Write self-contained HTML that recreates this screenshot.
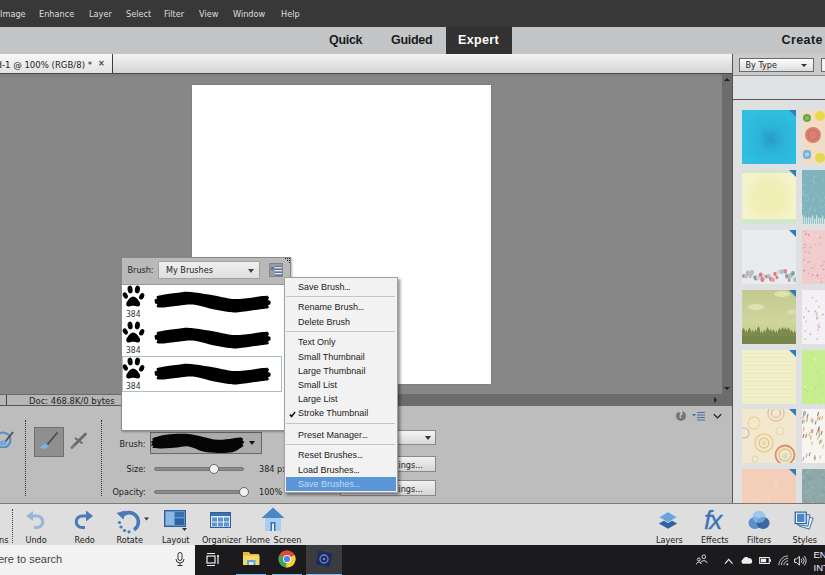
<!DOCTYPE html>
<html><head><meta charset="utf-8">
<style>
*{box-sizing:border-box;margin:0;padding:0}
html,body{width:825px;height:575px;overflow:hidden;background:#878787;font-family:"DejaVu Sans Condensed","DejaVu Sans",sans-serif;}
.lib{font-family:"Liberation Sans",sans-serif}
.abs{position:absolute}
.t{position:absolute;white-space:nowrap;line-height:1}
#menubar{left:0;top:0;width:825px;height:27px;background:#383838}
#menubar span{position:absolute;top:9.5px;font-size:9.1px;line-height:1;color:#dedede;white-space:nowrap;font-family:"DejaVu Sans Condensed","DejaVu Sans",sans-serif}
#modebar{left:0;top:27px;width:825px;height:27px;background:#c3c5c7}
#modebar span,#expert span{font-family:"Liberation Sans",sans-serif;position:absolute;top:7px;font-size:12.5px;line-height:1;font-weight:bold;color:#1a1a1a;letter-spacing:-0.3px}
#expert{left:446px;top:27px;width:66px;height:27px;background:#323232}
#expert span{color:#fff;left:12px}
#tabbar{left:0;top:54px;width:732px;height:20px;background:linear-gradient(#f4f4f4,#d4d4d4);border-bottom:1px solid #4a4a4a}
#doctab{left:0;top:54px;width:113px;height:19px;border-right:1px solid #3c3c3c;background:linear-gradient(#f8f8f8,#e2e2e2)}
#canvas{left:0;top:74px;width:722px;height:320px;background:linear-gradient(#7c7c7c,#878787 4px)}
#doc{left:192px;top:84.5px;width:299px;height:299.5px;background:#fff;box-shadow:0 0 1.5px rgba(0,0,0,.2)}
#vscroll{left:722px;top:74px;width:10px;height:332px;background:#6c6c6c}
#hscroll{left:0;top:394px;width:722px;height:12px;background:#6c6c6c}
#status{left:0;top:394px;width:200px;height:12px;background:#b6b6b6;border-top:1px solid #6a6a6a;border-bottom:1px solid #555}
#options{left:0;top:406px;width:732px;height:97px;background:#bdbdbd}
#taskbar{left:0;top:503px;width:825px;height:42px;background:#dedede;border-top:1px solid #7a7a7a}
#wintask{left:0;top:545px;width:825px;height:30px;background:#1b1b1d}
#right{left:732px;top:54px;width:93px;height:449px;background:#dfe0e2;border-left:1px solid #555}
</style></head><body>
<div id="menubar" class="abs">
<span style="left:0px">Image</span><span style="left:39px">Enhance</span><span style="left:89px">Layer</span><span style="left:126px">Select</span><span style="left:164px">Filter</span><span style="left:199px">View</span><span style="left:233px">Window</span><span style="left:281px">Help</span>
</div>
<div id="modebar" class="abs">
<span style="left:329px">Quick</span><span style="left:391px">Guided</span><span style="left:781.5px;letter-spacing:0.4px">Create</span>
</div>
<div id="expert" class="abs"><span style="letter-spacing:0.35px">Expert</span></div>
<div id="tabbar" class="abs"></div>
<div id="doctab" class="abs"><span class="t" style="left:-3.500px;top:5.500px;font-size:9.500px;color:#222">d-1 @ 100% (RGB/8) *</span><span class="t" style="left:98px;top:5px;font-size:9px;font-weight:bold;color:#444">×</span></div>
<div id="canvas" class="abs"></div>
<div id="doc" class="abs"></div>
<div id="hscroll" class="abs"></div>
<div id="vscroll" class="abs"></div>
<div id="status" class="abs"><div class="abs" style="left:6px;top:0;width:1px;height:10px;background:#444"></div><span class="t" style="left:29px;top:1px;font-size:9.4px;color:#222">Doc: 468.8K/0 bytes</span></div>
<div id="options" class="abs"></div>
<div id="right" class="abs"></div>
<div id="taskbar" class="abs"></div>
<div id="wintask" class="abs"></div>
<div id="rp" class="abs" style="left:733px;top:54px;width:92px;height:449px;overflow:hidden">
<div class="abs" style="left:0;top:0;width:92px;height:22px;background:#c9cbcd;border-bottom:1px solid #8c8c8c"></div>
<div class="abs" style="left:0;top:23px;width:92px;height:23px;background:#e1e2e4;border-bottom:1px solid #555"></div>
<div class="abs" style="left:6px;top:4px;width:75px;height:14px;border:1px solid #6a6a6a;background:linear-gradient(#fdfdfd,#dcdcdc)"><span class="t" style="left:5.500px;top:2px;font-size:9px;color:#222">By Type</span><div class="abs" style="left:61px;top:5px;border-left:3px solid transparent;border-right:3px solid transparent;border-top:3.500px solid #333"></div></div>
<div class="abs" style="left:88px;top:4px;width:10px;height:14px;border:1px solid #6a6a6a;background:#f4f4f4"></div>
<svg width="0" height="0" style="position:absolute"><defs><filter id="bl"><feGaussianBlur stdDeviation="1.800"/></filter><radialGradient id="gc" cx="0.55" cy="0.55" r="0.6"><stop offset="0" stop-color="#2aa0d0"/><stop offset="0.45" stop-color="#2bb6da"/><stop offset="1" stop-color="#2fc0e0"/></radialGradient><radialGradient id="gy" cx="0.5" cy="0.5" r="0.5"><stop offset="0" stop-color="#efedb0"/><stop offset="0.6" stop-color="#f1efb8"/><stop offset="1" stop-color="#f5f3cc"/></radialGradient><linearGradient id="go" x1="0" y1="0" x2="0" y2="1"><stop offset="0" stop-color="#c3ca90"/><stop offset="0.6" stop-color="#cfd59c"/><stop offset="1" stop-color="#bcc586"/></linearGradient></defs></svg>
<svg class="abs" style="left:9px;top:56px" width="54" height="54" viewBox="0 0 54 54"><rect width="54" height="54" fill="#2bb8dc"/><rect width="54" height="54" fill="url(#gc)"/><path d="M20 22 L34 34 M31 21 L24 36" stroke="#2a90c4" stroke-width="4" opacity=".35" filter="url(#bl)"/><path d="M47 0 H54 V7 Z" fill="#2c7fc0"/></svg>
<svg class="abs" style="left:9px;top:116px" width="54" height="54" viewBox="0 0 54 54"><rect width="54" height="54" fill="#f2f0c2"/><rect width="54" height="54" fill="url(#gy)"/><rect width="54" height="3" fill="#cfe6d0"/><rect y="50" width="54" height="4" fill="#cfe6d0"/><rect y="49" width="54" height="1" fill="#e8e6b0"/><path d="M47 0 H54 V7 Z" fill="#2c7fc0"/></svg>
<svg class="abs" style="left:9px;top:176px" width="54" height="54" viewBox="0 0 54 54"><rect width="54" height="54" fill="#e9ecee"/><ellipse cx="1.7" cy="45.9" rx="1.6" ry="2.0" fill="#e07880"/><ellipse cx="4.0" cy="46.2" rx="1.8" ry="2.3" fill="#a8c4c8"/><ellipse cx="5.8" cy="43.1" rx="2.2" ry="2.7" fill="#a8c4c8"/><ellipse cx="8.2" cy="45.9" rx="1.6" ry="2.0" fill="#e6a3ab"/><ellipse cx="9.9" cy="42.4" rx="2.1" ry="2.7" fill="#a8c4c8"/><ellipse cx="12.5" cy="47.0" rx="1.3" ry="1.6" fill="#e07880"/><ellipse cx="13.8" cy="48.0" rx="2.0" ry="2.5" fill="#7fa0a4"/><ellipse cx="16.3" cy="47.5" rx="2.1" ry="2.6" fill="#c8d8dc"/><ellipse cx="18.7" cy="44.8" rx="1.9" ry="2.4" fill="#e07880"/><ellipse cx="20.4" cy="49.4" rx="2.1" ry="2.6" fill="#d9868c"/><ellipse cx="21.9" cy="45.5" rx="1.5" ry="1.8" fill="#c8d8dc"/><ellipse cx="24.5" cy="46.6" rx="1.5" ry="1.9" fill="#e07880"/><ellipse cx="27.0" cy="46.2" rx="1.7" ry="2.2" fill="#a8c4c8"/><ellipse cx="28.8" cy="49.1" rx="1.9" ry="2.4" fill="#d9868c"/><ellipse cx="31.1" cy="49.9" rx="1.9" ry="2.3" fill="#e6a3ab"/><ellipse cx="33.0" cy="43.9" rx="1.7" ry="2.2" fill="#e07880"/><ellipse cx="34.9" cy="47.4" rx="1.4" ry="1.8" fill="#e07880"/><ellipse cx="36.6" cy="42.1" rx="1.7" ry="2.1" fill="#c8d8dc"/><ellipse cx="39.5" cy="41.8" rx="2.0" ry="2.5" fill="#a8c4c8"/><ellipse cx="41.4" cy="41.2" rx="1.6" ry="2.0" fill="#a8c4c8"/><ellipse cx="43.4" cy="41.4" rx="1.8" ry="2.3" fill="#d9868c"/><ellipse cx="44.9" cy="46.3" rx="1.8" ry="2.2" fill="#7fa0a4"/><ellipse cx="47.1" cy="50.0" rx="1.5" ry="1.9" fill="#d9868c"/><ellipse cx="48.7" cy="45.8" rx="2.1" ry="2.7" fill="#a8c4c8"/><ellipse cx="50.9" cy="43.4" rx="1.9" ry="2.4" fill="#7fa0a4"/><ellipse cx="53.0" cy="49.6" rx="2.1" ry="2.6" fill="#a8c4c8"/><path d="M47 0 H54 V7 Z" fill="#2c7fc0"/></svg>
<svg class="abs" style="left:9px;top:236px" width="54" height="54" viewBox="0 0 54 54"><rect width="54" height="54" fill="#c6cd93"/><rect width="54" height="54" fill="url(#go)"/><ellipse cx="14" cy="17" rx="8" ry="3" fill="#dde2b4"/><ellipse cx="40" cy="4" rx="8" ry="3" fill="#dde2b4"/><ellipse cx="50" cy="22" rx="5" ry="2.500" fill="#d9deae"/><path d="M0 54 V41.5 L0.0 40.4 L1.5 37.4 L3.0 40.4 L3.0 42.8 L4.5 39.8 L6.0 42.8 L6.0 40.4 L7.5 37.4 L9.0 40.4 L9.0 42.8 L10.5 39.8 L12.0 42.8 L12.0 41.9 L13.5 38.9 L15.0 41.9 L15.0 39.0 L16.5 36.0 L18.0 39.0 L18.0 43.4 L19.5 40.4 L21.0 43.4 L21.0 42.6 L22.5 39.6 L24.0 42.6 L24.0 39.9 L25.5 36.9 L27.0 39.9 L27.0 41.7 L28.5 38.7 L30.0 41.7 L30.0 42.1 L31.5 39.1 L33.0 42.1 L33.0 43.2 L34.5 40.2 L36.0 43.2 L36.0 40.7 L37.5 37.7 L39.0 40.7 L39.0 39.8 L40.5 36.8 L42.0 39.8 L42.0 40.0 L43.5 37.0 L45.0 40.0 L45.0 40.2 L46.5 37.2 L48.0 40.2 L48.0 42.4 L49.5 39.4 L51.0 42.4 L51.0 43.4 L52.5 40.4 L54.0 43.4 L54 41.5 V54 Z" fill="#7e8a4c"/><path d="M0 46 H54 V54 H0 Z" fill="#78854a"/><path d="M47 0 H54 V7 Z" fill="#2c7fc0"/></svg>
<svg class="abs" style="left:9px;top:296px" width="54" height="54" viewBox="0 0 54 54"><rect width="54" height="54" fill="#f1f0cb"/><rect y="3" width="54" height="1" fill="#eaeac0"/><rect y="7" width="54" height="1" fill="#eaeac0"/><rect y="11" width="54" height="1" fill="#eaeac0"/><rect y="15" width="54" height="1" fill="#eaeac0"/><rect y="19" width="54" height="1" fill="#eaeac0"/><rect y="23" width="54" height="1" fill="#eaeac0"/><rect y="27" width="54" height="1" fill="#eaeac0"/><rect y="31" width="54" height="1" fill="#eaeac0"/><rect y="35" width="54" height="1" fill="#eaeac0"/><rect y="39" width="54" height="1" fill="#eaeac0"/><rect y="43" width="54" height="1" fill="#eaeac0"/><rect y="47" width="54" height="1" fill="#eaeac0"/><rect y="51" width="54" height="1" fill="#eaeac0"/><path d="M47 0 H54 V7 Z" fill="#2c7fc0"/></svg>
<svg class="abs" style="left:9px;top:355px" width="54" height="54" viewBox="0 0 54 54"><rect width="54" height="54" fill="#f2e8cf"/><circle cx="22" cy="34" r="9" fill="none" stroke="#e8d08c" stroke-width="1.500"/><circle cx="22" cy="34" r="5" fill="none" stroke="#e8c890" stroke-width="1.500"/><circle cx="22" cy="34" r="2" fill="#e6d9a0"/><circle cx="43" cy="46" r="9.500" fill="none" stroke="#d4906c" stroke-width="1.800"/><circle cx="43" cy="46" r="6" fill="none" stroke="#e4c47c" stroke-width="1.500"/><circle cx="43" cy="47" r="3" fill="#cfe0c4"/><circle cx="34" cy="4" r="8" fill="none" stroke="#e6c4a0" stroke-width="1.500"/><circle cx="34" cy="4" r="4.500" fill="none" stroke="#e0b4a4" stroke-width="1.200"/><circle cx="12" cy="14" r="6" fill="none" stroke="#ead894" stroke-width="1.300"/><circle cx="38" cy="22" r="4" fill="none" stroke="#ead8a0" stroke-width="1.200"/><circle cx="2" cy="24" r="5" fill="none" stroke="#c8bcc0" stroke-width="1.200"/><circle cx="13" cy="50" r="3" fill="none" stroke="#e6d49c" stroke-width="1"/><path d="M47 0 H54 V7 Z" fill="#2c7fc0"/></svg>
<svg class="abs" style="left:9px;top:415px" width="54" height="54" viewBox="0 0 54 54"><rect width="54" height="54" fill="#f3cfba"/><circle cx="17.7" cy="20.8" r="0.700" fill="#f9e4d8"/><circle cx="31.5" cy="8.7" r="0.700" fill="#f9e4d8"/><circle cx="33.7" cy="18.6" r="0.700" fill="#f9e4d8"/><circle cx="19.6" cy="47.9" r="0.700" fill="#f9e4d8"/><circle cx="32.4" cy="15.9" r="0.700" fill="#f9e4d8"/><circle cx="26.5" cy="31.5" r="0.700" fill="#f9e4d8"/><circle cx="49.7" cy="3.1" r="0.700" fill="#f9e4d8"/><circle cx="20.5" cy="33.4" r="0.700" fill="#f9e4d8"/><circle cx="16.9" cy="32.1" r="0.700" fill="#f9e4d8"/><circle cx="10.9" cy="11.3" r="0.700" fill="#f9e4d8"/><circle cx="39.9" cy="44.2" r="0.700" fill="#f9e4d8"/><circle cx="15.2" cy="41.4" r="0.700" fill="#f9e4d8"/><circle cx="7.2" cy="42.7" r="0.700" fill="#f9e4d8"/><circle cx="50.6" cy="36.2" r="0.700" fill="#f9e4d8"/><circle cx="8.6" cy="27.0" r="0.700" fill="#f9e4d8"/><circle cx="34.7" cy="15.5" r="0.700" fill="#f9e4d8"/><circle cx="18.4" cy="35.9" r="0.700" fill="#f9e4d8"/><circle cx="34.5" cy="6.9" r="0.700" fill="#f9e4d8"/><circle cx="32.0" cy="49.5" r="0.700" fill="#f9e4d8"/><circle cx="35.7" cy="13.2" r="0.700" fill="#f9e4d8"/><circle cx="42.5" cy="50.0" r="0.700" fill="#f9e4d8"/><circle cx="6.0" cy="39.1" r="0.700" fill="#f9e4d8"/><circle cx="12.9" cy="30.4" r="0.700" fill="#f9e4d8"/><circle cx="15.5" cy="41.4" r="0.700" fill="#f9e4d8"/><circle cx="3.7" cy="49.9" r="0.700" fill="#f9e4d8"/><path d="M47 0 H54 V7 Z" fill="#2c7fc0"/></svg>
<svg class="abs" style="left:69px;top:56px" width="24" height="54" viewBox="0 0 24 54"><rect width="24" height="54" fill="#f3dcc6"/><circle cx="5" cy="8" r="4" fill="#6ea446"/><circle cx="5" cy="8" r="2" fill="#8cba5c"/><circle cx="18" cy="6" r="5" fill="#ecd94a"/><circle cx="11" cy="25" r="8" fill="#d98274"/><circle cx="11" cy="25" r="5" fill="none" stroke="#c86c60" stroke-width="1"/><rect x="1" y="40" width="8" height="9" rx="3" fill="#76b4dc"/><circle cx="5" cy="44.500" r="2" fill="#b0d4ec"/><circle cx="18" cy="48" r="5" fill="#e6d84c"/></svg>
<svg class="abs" style="left:69px;top:116px" width="24" height="54" viewBox="0 0 24 54"><rect width="24" height="54" fill="#80b4bd"/><rect x="7.2" y="39.1" width="0.600" height="1.600" fill="#a8cdd3"/><rect x="13.2" y="40.3" width="0.600" height="1.600" fill="#a8cdd3"/><rect x="7.8" y="38.8" width="0.600" height="1.600" fill="#a8cdd3"/><rect x="2.0" y="30.0" width="0.600" height="1.600" fill="#a8cdd3"/><rect x="13.6" y="21.7" width="0.600" height="1.600" fill="#a8cdd3"/><rect x="11.9" y="39.7" width="0.600" height="1.600" fill="#a8cdd3"/><rect x="10.7" y="30.6" width="0.600" height="1.600" fill="#a8cdd3"/><rect x="6.7" y="27.9" width="0.600" height="1.600" fill="#a8cdd3"/><rect x="0.8" y="21.4" width="0.600" height="1.600" fill="#a8cdd3"/><rect x="4.6" y="24.0" width="0.600" height="1.600" fill="#a8cdd3"/><rect x="19.1" y="30.2" width="0.600" height="1.600" fill="#a8cdd3"/><rect x="11.7" y="27.5" width="0.600" height="1.600" fill="#a8cdd3"/><rect x="22.7" y="34.1" width="0.600" height="1.600" fill="#a8cdd3"/><rect x="0.7" y="23.2" width="0.600" height="1.600" fill="#a8cdd3"/><rect x="17.3" y="35.4" width="0.600" height="1.600" fill="#a8cdd3"/><rect x="22.2" y="26.8" width="0.600" height="1.600" fill="#a8cdd3"/><rect x="20.5" y="40.2" width="0.600" height="1.600" fill="#a8cdd3"/><rect x="19.7" y="44.8" width="0.600" height="1.600" fill="#a8cdd3"/><rect x="2.8" y="14.3" width="0.600" height="1.600" fill="#a8cdd3"/><rect x="0.8" y="37.7" width="0.600" height="1.600" fill="#a8cdd3"/><rect x="11.8" y="12.3" width="0.600" height="1.600" fill="#a8cdd3"/><rect x="20.3" y="22.1" width="0.600" height="1.600" fill="#a8cdd3"/><rect x="1.1" y="24.2" width="0.600" height="1.600" fill="#a8cdd3"/><rect x="2.8" y="25.1" width="0.600" height="1.600" fill="#a8cdd3"/><rect x="5.5" y="4.8" width="0.600" height="1.600" fill="#a8cdd3"/><rect x="12.4" y="6.2" width="0.600" height="1.600" fill="#a8cdd3"/><rect x="21.0" y="8.8" width="0.600" height="1.600" fill="#a8cdd3"/><rect x="2.9" y="44.8" width="0.600" height="1.600" fill="#a8cdd3"/><rect x="12.4" y="38.1" width="0.600" height="1.600" fill="#a8cdd3"/><rect x="1.4" y="13.3" width="0.600" height="1.600" fill="#a8cdd3"/><rect x="2.8" y="41.3" width="0.600" height="1.600" fill="#a8cdd3"/><rect x="2.7" y="14.1" width="0.600" height="1.600" fill="#a8cdd3"/><rect x="6.3" y="41.4" width="0.600" height="1.600" fill="#a8cdd3"/><rect x="3.0" y="42.7" width="0.600" height="1.600" fill="#a8cdd3"/><rect x="11.2" y="28.0" width="0.600" height="1.600" fill="#a8cdd3"/><rect x="9.2" y="35.8" width="0.600" height="1.600" fill="#a8cdd3"/><rect x="5.7" y="30.0" width="0.600" height="1.600" fill="#a8cdd3"/><rect x="12.0" y="6.1" width="0.600" height="1.600" fill="#a8cdd3"/><rect x="7.4" y="38.4" width="0.600" height="1.600" fill="#a8cdd3"/><rect x="19.7" y="36.6" width="0.600" height="1.600" fill="#a8cdd3"/><rect x="1.1" y="6.1" width="0.600" height="1.600" fill="#a8cdd3"/><rect x="11.1" y="5.4" width="0.600" height="1.600" fill="#a8cdd3"/><rect x="16.4" y="25.6" width="0.600" height="1.600" fill="#a8cdd3"/><rect x="11.3" y="10.6" width="0.600" height="1.600" fill="#a8cdd3"/><rect x="1.7" y="20.2" width="0.600" height="1.600" fill="#a8cdd3"/><rect x="9.0" y="16.8" width="0.600" height="1.600" fill="#a8cdd3"/><rect x="6.1" y="45.5" width="0.600" height="1.600" fill="#a8cdd3"/><rect x="9.9" y="9.4" width="0.600" height="1.600" fill="#a8cdd3"/><rect x="0.1" y="34.4" width="0.600" height="1.600" fill="#a8cdd3"/><rect x="18.3" y="27.8" width="0.600" height="1.600" fill="#a8cdd3"/><rect x="0" y="45.2" width="1.300" height="9" fill="#cfe2e4"/><rect x="2" y="46.8" width="1.300" height="9" fill="#cfe2e4"/><rect x="4" y="47.6" width="1.300" height="9" fill="#cfe2e4"/><rect x="6" y="47.2" width="1.300" height="9" fill="#cfe2e4"/><rect x="8" y="47.5" width="1.300" height="9" fill="#cfe2e4"/><rect x="10" y="45.2" width="1.300" height="9" fill="#cfe2e4"/><rect x="12" y="48.5" width="1.300" height="9" fill="#cfe2e4"/><rect x="14" y="45.2" width="1.300" height="9" fill="#cfe2e4"/><rect x="16" y="47.5" width="1.300" height="9" fill="#cfe2e4"/><rect x="18" y="48.0" width="1.300" height="9" fill="#cfe2e4"/><rect x="20" y="46.3" width="1.300" height="9" fill="#cfe2e4"/><rect x="22" y="48.8" width="1.300" height="9" fill="#cfe2e4"/></svg>
<svg class="abs" style="left:69px;top:176px" width="24" height="54" viewBox="0 0 24 54"><rect width="24" height="54" fill="#f1cccd"/><circle cx="9.6" cy="1.0" r="0.5" fill="#f8e4e4"/><circle cx="16.0" cy="3.9" r="0.6" fill="#f8e4e4"/><circle cx="3.0" cy="1.5" r="0.6" fill="#d88890"/><circle cx="18.2" cy="14.2" r="0.6" fill="#e09aa2"/><circle cx="21.6" cy="39.5" r="0.8" fill="#d88890"/><circle cx="18.2" cy="36.0" r="0.8" fill="#d88890"/><circle cx="12.2" cy="43.8" r="0.8" fill="#f8e4e4"/><circle cx="3.3" cy="41.8" r="0.4" fill="#e09aa2"/><circle cx="13.0" cy="35.6" r="0.6" fill="#e09aa2"/><circle cx="7.9" cy="46.0" r="0.4" fill="#e09aa2"/><circle cx="15.5" cy="45.2" r="0.9" fill="#d88890"/><circle cx="6.9" cy="4.8" r="0.9" fill="#d88890"/><circle cx="11.8" cy="38.6" r="0.5" fill="#d88890"/><circle cx="2.3" cy="29.9" r="0.7" fill="#d88890"/><circle cx="4.1" cy="4.2" r="0.9" fill="#d88890"/><circle cx="5.7" cy="33.3" r="0.8" fill="#f8e4e4"/><circle cx="5.8" cy="32.4" r="0.9" fill="#d88890"/><circle cx="9.6" cy="4.5" r="0.7" fill="#f8e4e4"/><circle cx="19.4" cy="52.2" r="0.6" fill="#d88890"/><circle cx="17.4" cy="36.4" r="0.7" fill="#f8e4e4"/><circle cx="3.6" cy="21.7" r="0.8" fill="#e09aa2"/><circle cx="2.2" cy="40.4" r="0.9" fill="#d88890"/><circle cx="21.9" cy="31.7" r="0.8" fill="#e09aa2"/><circle cx="6.1" cy="10.8" r="0.7" fill="#f8e4e4"/><circle cx="21.5" cy="46.0" r="0.7" fill="#f8e4e4"/><circle cx="15.4" cy="46.2" r="0.7" fill="#d88890"/><circle cx="13.4" cy="14.4" r="0.5" fill="#e09aa2"/><circle cx="6.2" cy="43.4" r="0.5" fill="#d88890"/><circle cx="8.3" cy="17.4" r="0.8" fill="#e09aa2"/><circle cx="9.6" cy="37.7" r="0.8" fill="#e09aa2"/><circle cx="10.8" cy="45.1" r="0.8" fill="#d88890"/><circle cx="0.6" cy="53.6" r="0.4" fill="#f8e4e4"/><circle cx="18.0" cy="47.6" r="0.4" fill="#e09aa2"/><circle cx="20.5" cy="35.0" r="0.8" fill="#e09aa2"/><circle cx="22.1" cy="46.1" r="0.5" fill="#e09aa2"/><circle cx="17.8" cy="7.4" r="0.7" fill="#d88890"/><circle cx="19.7" cy="48.6" r="0.5" fill="#e09aa2"/><circle cx="7.2" cy="22.9" r="0.8" fill="#e09aa2"/><circle cx="2.7" cy="14.3" r="0.9" fill="#e09aa2"/><circle cx="8.2" cy="31.3" r="0.7" fill="#e09aa2"/><circle cx="0.7" cy="17.9" r="0.6" fill="#e09aa2"/><circle cx="4.8" cy="31.6" r="0.9" fill="#f8e4e4"/><circle cx="2.9" cy="17.2" r="0.8" fill="#e09aa2"/><circle cx="15.3" cy="6.1" r="0.8" fill="#f8e4e4"/><circle cx="2.2" cy="50.8" r="0.6" fill="#f8e4e4"/></svg>
<svg class="abs" style="left:69px;top:236px" width="24" height="54" viewBox="0 0 24 54"><rect width="24" height="54" fill="#f3f1f6"/><circle cx="16.9" cy="16.8" r="1" fill="#f0c0cc"/><circle cx="15.1" cy="49.2" r="1" fill="#c8d4a8"/><circle cx="3.3" cy="49.2" r="1" fill="#c8d4a8"/><circle cx="15.1" cy="28.8" r="1" fill="#e8a8bc"/><circle cx="15.0" cy="27.4" r="1" fill="#e8a8bc"/><circle cx="16.1" cy="35.9" r="1" fill="#f0c0cc"/><circle cx="16.6" cy="34.3" r="1" fill="#f0c0cc"/><circle cx="14.2" cy="11.0" r="1" fill="#f0c0cc"/><circle cx="10.5" cy="7.4" r="1" fill="#f0c0cc"/><circle cx="4.0" cy="18.6" r="1" fill="#f0c0cc"/><circle cx="14.6" cy="23.0" r="1" fill="#c8d4a8"/><circle cx="14.6" cy="24.9" r="1" fill="#c8d4a8"/><circle cx="17.4" cy="37.3" r="1" fill="#e8a8bc"/><circle cx="16.0" cy="39.7" r="1" fill="#f0c0cc"/><circle cx="13.1" cy="21.6" r="1" fill="#e8a8bc"/><circle cx="6.6" cy="21.2" r="1" fill="#e8a8bc"/><circle cx="1.9" cy="27.2" r="1" fill="#e8a8bc"/><circle cx="15.6" cy="27.7" r="1" fill="#c8d4a8"/><circle cx="20.8" cy="24.4" r="1" fill="#e8a8bc"/><circle cx="8.4" cy="44.3" r="1" fill="#e8a8bc"/><circle cx="4.2" cy="31.5" r="1" fill="#f0c0cc"/><circle cx="3.4" cy="40.9" r="1" fill="#f0c0cc"/></svg>
<svg class="abs" style="left:69px;top:296px" width="24" height="54" viewBox="0 0 24 54"><rect width="24" height="54" fill="#c6ee8e"/><circle cx="3.4" cy="36.9" r="0.700" fill="#f0f4c0"/><circle cx="15.1" cy="21.6" r="0.700" fill="#e8b0a0"/><circle cx="13.4" cy="9.3" r="0.700" fill="#f0f4c0"/><circle cx="17.8" cy="29.2" r="0.700" fill="#e8b0a0"/><circle cx="12.9" cy="12.1" r="0.700" fill="#f0f4c0"/><circle cx="8.8" cy="16.7" r="0.700" fill="#f0f4c0"/><circle cx="19.7" cy="49.5" r="0.700" fill="#f0f4c0"/><circle cx="7.6" cy="47.3" r="0.700" fill="#f0f4c0"/><circle cx="14.3" cy="50.8" r="0.700" fill="#f0f4c0"/><circle cx="19.8" cy="35.4" r="0.700" fill="#e8b0a0"/><circle cx="13.6" cy="38.3" r="0.700" fill="#e8b0a0"/><circle cx="3.3" cy="39.8" r="0.700" fill="#e8b0a0"/><circle cx="11.3" cy="28.2" r="0.700" fill="#f0f4c0"/><circle cx="5.2" cy="41.1" r="0.700" fill="#e8b0a0"/></svg>
<svg class="abs" style="left:69px;top:355px" width="24" height="54" viewBox="0 0 24 54"><rect width="24" height="54" fill="#f7f5ef"/><path d="M1.8 25.5 l-0.800 3" stroke="#b0706c" stroke-width="1.100" stroke-linecap="round"/><path d="M15.2 22.8 l-0.800 3" stroke="#8fa8c0" stroke-width="1.100" stroke-linecap="round"/><path d="M13.5 48.0 l-0.800 3" stroke="#8fa8c0" stroke-width="1.100" stroke-linecap="round"/><path d="M20.6 7.6 l-0.800 3" stroke="#e0c070" stroke-width="1.100" stroke-linecap="round"/><path d="M18.4 31.5 l-0.800 3" stroke="#7c98a8" stroke-width="1.100" stroke-linecap="round"/><path d="M2.1 18.6 l-0.800 3" stroke="#d9a070" stroke-width="1.100" stroke-linecap="round"/><path d="M6.1 4.8 l-0.800 3" stroke="#e0c070" stroke-width="1.100" stroke-linecap="round"/><path d="M12.9 46.6 l-0.800 3" stroke="#d9a070" stroke-width="1.100" stroke-linecap="round"/><path d="M8.1 43.7 l-0.800 3" stroke="#7c98a8" stroke-width="1.100" stroke-linecap="round"/><path d="M16.3 7.6 l-0.800 3" stroke="#d9a070" stroke-width="1.100" stroke-linecap="round"/><path d="M19.9 30.5 l-0.800 3" stroke="#e0c070" stroke-width="1.100" stroke-linecap="round"/><path d="M21.4 36.1 l-0.800 3" stroke="#e0c070" stroke-width="1.100" stroke-linecap="round"/><path d="M17.3 17.8 l-0.800 3" stroke="#b0706c" stroke-width="1.100" stroke-linecap="round"/><path d="M18.7 46.7 l-0.800 3" stroke="#e0c070" stroke-width="1.100" stroke-linecap="round"/><path d="M20.0 22.4 l-0.800 3" stroke="#b0706c" stroke-width="1.100" stroke-linecap="round"/><path d="M17.7 24.8 l-0.800 3" stroke="#8fa8c0" stroke-width="1.100" stroke-linecap="round"/><path d="M3.4 3.1 l-0.800 3" stroke="#7c98a8" stroke-width="1.100" stroke-linecap="round"/><path d="M2.7 10.8 l-0.800 3" stroke="#e0c070" stroke-width="1.100" stroke-linecap="round"/><path d="M4.5 25.4 l-0.800 3" stroke="#d9a070" stroke-width="1.100" stroke-linecap="round"/><path d="M16.4 27.3 l-0.800 3" stroke="#e0c070" stroke-width="1.100" stroke-linecap="round"/><path d="M10.3 32.8 l-0.800 3" stroke="#e0c070" stroke-width="1.100" stroke-linecap="round"/><path d="M7.7 23.8 l-0.800 3" stroke="#e0c070" stroke-width="1.100" stroke-linecap="round"/><path d="M17.7 20.7 l-0.800 3" stroke="#d9a070" stroke-width="1.100" stroke-linecap="round"/><path d="M5.0 45.1 l-0.800 3" stroke="#d9a070" stroke-width="1.100" stroke-linecap="round"/><path d="M16.8 19.0 l-0.800 3" stroke="#b0706c" stroke-width="1.100" stroke-linecap="round"/><path d="M9.2 26.9 l-0.800 3" stroke="#d9a070" stroke-width="1.100" stroke-linecap="round"/><path d="M14.1 12.0 l-0.800 3" stroke="#7c98a8" stroke-width="1.100" stroke-linecap="round"/><path d="M1.1 11.2 l-0.800 3" stroke="#7c98a8" stroke-width="1.100" stroke-linecap="round"/><path d="M18.2 8.0 l-0.800 3" stroke="#d9a070" stroke-width="1.100" stroke-linecap="round"/><path d="M11.1 10.6 l-0.800 3" stroke="#d9a070" stroke-width="1.100" stroke-linecap="round"/><path d="M5.6 9.4 l-0.800 3" stroke="#d9a070" stroke-width="1.100" stroke-linecap="round"/><path d="M9.9 9.2 l-0.800 3" stroke="#d9a070" stroke-width="1.100" stroke-linecap="round"/><path d="M1.6 6.4 l-0.800 3" stroke="#d9a070" stroke-width="1.100" stroke-linecap="round"/><path d="M4.7 25.0 l-0.800 3" stroke="#8fa8c0" stroke-width="1.100" stroke-linecap="round"/><path d="M2.3 2.1 l-0.800 3" stroke="#7c98a8" stroke-width="1.100" stroke-linecap="round"/><path d="M10.9 21.0 l-0.800 3" stroke="#d9a070" stroke-width="1.100" stroke-linecap="round"/><path d="M16.5 3.5 l-0.800 3" stroke="#b0706c" stroke-width="1.100" stroke-linecap="round"/><path d="M9.9 20.4 l-0.800 3" stroke="#d9a070" stroke-width="1.100" stroke-linecap="round"/><path d="M1.6 48.3 l-0.800 3" stroke="#8fa8c0" stroke-width="1.100" stroke-linecap="round"/><path d="M5.8 5.6 l-0.800 3" stroke="#7c98a8" stroke-width="1.100" stroke-linecap="round"/></svg>
<svg class="abs" style="left:69px;top:415px" width="24" height="54" viewBox="0 0 24 54"><rect width="24" height="54" fill="#8fa9aa"/><path d="M20.7 8.0 l1.9 2.0" stroke="#7c9898" stroke-width="0.800"/><path d="M21.1 37.6 l-1.9 1.6" stroke="#7c9898" stroke-width="0.800"/><path d="M2.0 11.7 l1.4 1.2" stroke="#7c9898" stroke-width="0.800"/><path d="M12.6 21.5 l1.1 1.8" stroke="#7c9898" stroke-width="0.800"/><path d="M19.2 22.1 l1.7 1.7" stroke="#7c9898" stroke-width="0.800"/><path d="M10.1 17.8 l0.8 1.7" stroke="#a4bcbc" stroke-width="0.800"/><path d="M11.7 30.1 l1.7 2.4" stroke="#7c9898" stroke-width="0.800"/><path d="M1.0 6.9 l1.0 2.6" stroke="#a4bcbc" stroke-width="0.800"/><path d="M17.4 27.1 l-1.6 1.5" stroke="#a4bcbc" stroke-width="0.800"/><path d="M20.2 34.9 l-0.2 2.8" stroke="#7c9898" stroke-width="0.800"/><path d="M22.9 0.1 l-1.2 2.6" stroke="#a4bcbc" stroke-width="0.800"/><path d="M7.8 12.5 l-0.2 2.6" stroke="#a4bcbc" stroke-width="0.800"/><path d="M5.5 2.0 l-1.4 2.3" stroke="#a4bcbc" stroke-width="0.800"/><path d="M2.6 11.5 l-1.2 2.7" stroke="#7c9898" stroke-width="0.800"/><path d="M11.6 36.3 l-0.7 2.8" stroke="#a4bcbc" stroke-width="0.800"/><path d="M10.8 24.9 l-1.8 2.6" stroke="#a4bcbc" stroke-width="0.800"/><path d="M19.8 4.1 l1.8 1.5" stroke="#a4bcbc" stroke-width="0.800"/><path d="M10.7 8.9 l1.3 2.2" stroke="#7c9898" stroke-width="0.800"/><path d="M17.5 34.9 l-0.6 2.2" stroke="#7c9898" stroke-width="0.800"/><path d="M17.9 11.7 l1.8 1.9" stroke="#7c9898" stroke-width="0.800"/><path d="M4.7 21.6 l-0.1 2.5" stroke="#a4bcbc" stroke-width="0.800"/><path d="M7.9 7.7 l1.0 2.8" stroke="#7c9898" stroke-width="0.800"/><path d="M9.7 25.9 l0.4 1.4" stroke="#7c9898" stroke-width="0.800"/><path d="M19.3 2.5 l-1.1 1.9" stroke="#7c9898" stroke-width="0.800"/><path d="M5.0 6.6 l1.7 2.5" stroke="#7c9898" stroke-width="0.800"/><path d="M21.4 21.4 l-0.3 2.9" stroke="#7c9898" stroke-width="0.800"/><path d="M11.1 30.9 l-0.4 3.0" stroke="#a4bcbc" stroke-width="0.800"/><path d="M6.7 37.4 l-1.3 1.2" stroke="#a4bcbc" stroke-width="0.800"/><path d="M6.8 20.8 l0.6 1.1" stroke="#a4bcbc" stroke-width="0.800"/><path d="M6.3 17.3 l-0.6 2.5" stroke="#7c9898" stroke-width="0.800"/><path d="M3.3 17.8 l1.6 1.9" stroke="#a4bcbc" stroke-width="0.800"/><path d="M3.5 30.5 l0.8 3.0" stroke="#7c9898" stroke-width="0.800"/><path d="M21.7 17.3 l1.8 1.9" stroke="#a4bcbc" stroke-width="0.800"/><path d="M8.3 34.1 l-0.9 1.9" stroke="#7c9898" stroke-width="0.800"/><path d="M18.6 11.9 l-1.0 2.6" stroke="#a4bcbc" stroke-width="0.800"/><path d="M0.3 25.2 l-1.4 1.0" stroke="#a4bcbc" stroke-width="0.800"/><path d="M0.0 39.3 l1.2 1.7" stroke="#7c9898" stroke-width="0.800"/><path d="M22.5 1.4 l-1.3 1.0" stroke="#7c9898" stroke-width="0.800"/><path d="M20.8 33.4 l0.4 2.6" stroke="#7c9898" stroke-width="0.800"/><path d="M7.2 9.9 l1.2 1.8" stroke="#7c9898" stroke-width="0.800"/><path d="M7.8 1.2 l-1.9 3.0" stroke="#a4bcbc" stroke-width="0.800"/><path d="M21.0 32.3 l-1.0 1.3" stroke="#7c9898" stroke-width="0.800"/><path d="M11.7 33.2 l0.2 1.6" stroke="#a4bcbc" stroke-width="0.800"/><path d="M1.0 19.4 l-1.8 2.6" stroke="#7c9898" stroke-width="0.800"/><path d="M10.8 26.6 l1.7 2.6" stroke="#7c9898" stroke-width="0.800"/><path d="M8.5 25.3 l-0.8 1.1" stroke="#a4bcbc" stroke-width="0.800"/><path d="M22.8 21.9 l-0.4 1.7" stroke="#7c9898" stroke-width="0.800"/><path d="M6.4 10.2 l-0.9 2.1" stroke="#7c9898" stroke-width="0.800"/><path d="M3.2 1.5 l-0.1 1.5" stroke="#7c9898" stroke-width="0.800"/><path d="M21.4 24.5 l-1.9 2.1" stroke="#a4bcbc" stroke-width="0.800"/></svg>
</div>
<!-- scroll arrows -->
<div class="abs" style="left:724px;top:78px;border-left:3px solid transparent;border-right:3px solid transparent;border-bottom:3px solid #222"></div>
<div class="abs" style="left:724px;top:387px;border-left:3px solid transparent;border-right:3px solid transparent;border-top:3px solid #222"></div>
<div class="abs" style="left:714px;top:397px;border-top:3px solid transparent;border-bottom:3px solid transparent;border-left:3px solid #222"></div>
<!-- options panel content -->
<div id="opt" class="abs" style="left:0;top:406px;width:732px;height:97px;font-size:9px;color:#222">
 <div class="abs" style="left:25px;top:14px;width:0;height:76px;border-left:1px dotted #333"></div>
 <div class="abs" style="left:101px;top:14px;width:0;height:76px;border-left:1px dotted #333"></div>
 <!-- partial left icon -->
 <svg class="abs" style="left:0;top:24px" width="16" height="18" viewBox="0 0 16 18"><circle cx="3" cy="10" r="7.5" fill="none" stroke="#5a8cc4" stroke-width="2.2"/><path d="M13 2 L5 12" stroke="#555" stroke-width="2" /><ellipse cx="3" cy="13" rx="3.5" ry="2.5" fill="#6fa6dc"/></svg>
 <!-- selected brush tool -->
 <div class="abs" style="left:34px;top:21px;width:30px;height:30px;background:#8f8f8f;border:1px solid #707070"></div>
 <svg class="abs" style="left:36px;top:24px" width="26" height="24" viewBox="0 0 26 24"><path d="M21 3 L11 15" stroke="#4a4a4a" stroke-width="1.8" stroke-linecap="round"/><path d="M4 18 C6 14 10 13 12 15 C13 18 8 20 4 18 Z" fill="#79b4e8"/></svg>
 <!-- second icon -->
 <svg class="abs" style="left:69px;top:26px" width="20" height="18" viewBox="0 0 20 18"><path d="M16.500 2 L5 13.500" stroke="#6a6a6a" stroke-width="2.800" stroke-linecap="round"/><path d="M6 6 L13.500 11.500" stroke="#6a6a6a" stroke-width="2"/><path d="M2 16.500 L6 12.500" stroke="#7a7a7a" stroke-width="2.500"/></svg>
 <!-- labels -->
 <span class="t" style="left:119.5px;top:33.5px;font-size:9px">Brush:</span>
 <span class="t" style="left:126.5px;top:59px;font-size:9px">Size:</span>
 <span class="t" style="left:112.5px;top:81.7px;font-size:9px">Opacity:</span>
 <!-- brush dropdown -->
 <div class="abs" style="left:150px;top:26px;width:112px;height:22px;background:#ababab;border:1px solid #686868"></div>
 <svg class="abs" style="left:145px;top:20px" width="110" height="34" viewBox="0 0 110 34"><path d="M7.3 12.4 C8.5 12.0 10.9 10.6 14.5 9.9 C18.1 9.2 24.1 8.3 29.0 8.0 C33.9 7.7 38.7 7.5 43.6 8.0 C48.5 8.5 53.4 9.9 58.2 10.9 C63.1 11.9 67.9 13.6 72.7 13.8 C77.5 14.1 83.4 12.8 87.3 12.4 C91.2 12.0 94.5 11.7 96.0 11.6 L98 12.500 L97.500 14.500 L99.500 16 L97.500 18 L98.500 20 L96 21.800 L96.0 21.8 C94.5 22.5 91.2 25.4 87.3 26.2 C83.4 27.0 77.5 27.0 72.7 26.9 C67.9 26.8 63.1 26.6 58.2 25.5 C53.4 24.4 48.5 21.0 43.6 20.4 C38.7 19.8 33.9 21.4 29.0 21.8 C24.1 22.2 18.1 22.5 14.5 22.5 C10.9 22.5 8.5 21.9 7.3 21.8 L8.500 20 L5.500 19.500 L7.500 17.500 L5.800 16 L7.800 14.500 Z" fill="#050505"/></svg>
 <div class="abs" style="left:249px;top:34.5px;border-left:3.5px solid transparent;border-right:3.5px solid transparent;border-top:4px solid #111"></div>
 <!-- size slider -->
 <div class="abs" style="left:154px;top:61px;width:90px;height:4px;border-radius:2px;background:#8a8a8a;border:1px solid #777"></div>
 <div class="abs" style="left:209px;top:58px;width:10px;height:10px;border-radius:50%;background:#f2f2f2;border:1px solid #666"></div>
 <span class="t" style="left:259px;top:59px;font-size:9px">384 px</span>
 <!-- opacity slider -->
 <div class="abs" style="left:154px;top:83.5px;width:90px;height:4px;border-radius:2px;background:#8a8a8a;border:1px solid #777"></div>
 <div class="abs" style="left:239px;top:80.5px;width:10px;height:10px;border-radius:50%;background:#f2f2f2;border:1px solid #666"></div>
 <span class="t" style="left:259px;top:81.7px;font-size:9px">100%</span>
 <!-- right dropdown/buttons partially hidden -->
 <div class="abs" style="left:340px;top:24px;width:96px;height:15px;background:linear-gradient(#f4f4f4,#d8d8d8);border:1px solid #8a8a8a"></div>
 <div class="abs" style="left:425px;top:30px;border-left:3.5px solid transparent;border-right:3.5px solid transparent;border-top:4px solid #333"></div>
 <div class="abs" style="left:340px;top:50px;width:96px;height:16px;background:linear-gradient(#f2f2f2,#d4d4d4);border:1px solid #8a8a8a"><span class="t" style="left:41px;top:3.500px;font-size:9px">Settings...</span></div>
 <div class="abs" style="left:340px;top:74px;width:96px;height:16px;background:linear-gradient(#f2f2f2,#d4d4d4);border:1px solid #8a8a8a"><span class="t" style="left:41px;top:3.500px;font-size:9px">Settings...</span></div>
 <!-- help, menu, chevron -->
 <div class="abs" style="left:676px;top:5px;width:10px;height:10px;border-radius:50%;background:#777"><span class="t" style="left:2.5px;top:1px;font-size:8px;font-weight:bold;color:#ddd">?</span></div>
 <svg class="abs" style="left:692px;top:5px" width="14" height="10" viewBox="0 0 14 10"><path d="M0 3 L4 3 L2 5.5 Z" fill="#3a6ea8"/><path d="M5 1.5H13M5 4H13M5 6.500H13M5 9H13" stroke="#4a6e98" stroke-width="1"/></svg>
 <svg class="abs" style="left:713px;top:6.500px" width="9" height="6.500" viewBox="0 0 11 8"><path d="M1 1.500 L5.500 6 L10 1.500" fill="none" stroke="#222" stroke-width="1.6"/></svg>
</div>

<!-- brush popup -->
<div class="abs" style="left:121px;top:257px;width:170px;height:174px;background:#fff;border:1px solid #8a8a8a;box-shadow:1px 1px 2px rgba(0,0,0,.3)"></div>
<div class="abs" style="left:122px;top:258px;width:168px;height:27px;background:#b9b9b9;border-bottom:1px solid #9a9a9a"></div>
<span class="t" style="left:127.500px;top:265.500px;font-size:9px;color:#222">Brush:</span>
<div class="abs" style="left:158px;top:261px;width:102px;height:18px;background:linear-gradient(#f0f0f0,#dedede);border:1px solid #a2a2a2;border-radius:1px"><span class="t" style="left:7px;top:4px;font-size:9px;color:#222">My Brushes</span><div class="abs" style="left:89px;top:7px;border-left:3.500px solid transparent;border-right:3.500px solid transparent;border-top:4px solid #444"></div></div>
<div class="abs" style="left:269px;top:263px;width:14px;height:14px;background:#969ba4;border:1px solid #80858e"><div class="abs" style="left:1px;top:3px;width:3px;height:3px;background:#5878a4"></div><div class="abs" style="left:5px;top:2px;width:7px;height:1px;background:#5878a4;box-shadow:0 1px 0 #dfe6ee,0 3px 0 #5878a4,0 4px 0 #dfe6ee,0 6px 0 #5878a4,0 7px 0 #dfe6ee,0 9px 0 #5878a4"></div></div>
<div class="abs" style="left:285px;top:258px;width:1px;height:1px;background:#222;box-shadow:2px 0 #222,4px 0 #222,2px 2px #222,4px 2px #222,4px 4px #222"></div>
<svg class="abs" style="left:118px;top:284px" width="32" height="26" viewBox="0 0 32 26" fill="#000"><ellipse cx="7.300" cy="11.500" rx="2.300" ry="3.300" transform="rotate(-28 7.300 11.500)"/><ellipse cx="12.100" cy="5.500" rx="2.500" ry="3.900" transform="rotate(-8 12.100 5.500)"/><ellipse cx="19.400" cy="5.500" rx="2.500" ry="3.900" transform="rotate(10 19.400 5.500)"/><ellipse cx="23.700" cy="12.300" rx="2.300" ry="3.400" transform="rotate(28 23.700 12.300)"/><path d="M15.200 12.600 C17.500 12.600 19.500 15 21.200 17.500 C22.800 19.800 22.300 22.300 20 22.500 C18 22.700 17 21.800 15.200 21.800 C13.400 21.800 12.400 22.700 10.400 22.500 C8.100 22.300 7.600 19.800 9.200 17.500 C10.900 15 12.900 12.600 15.200 12.600 Z"/></svg>
<span class="t" style="left:126px;top:310px;font-size:8.500px;color:#333">384</span>
<svg class="abs" style="left:150px;top:284px" width="130" height="36" viewBox="0 0 130 36"><path d="M7.9 11.8 C9.2 11.5 11.9 10.8 15.8 10.2 C19.7 9.6 27.6 8.6 31.5 8.2 C35.4 7.8 36.8 7.8 39.4 7.9 C42.0 8.0 43.4 8.1 47.3 8.7 C51.2 9.3 57.8 10.3 63.0 11.3 C68.2 12.3 74.8 13.9 78.8 14.5 C82.8 15.1 84.1 15.0 86.7 15.0 C89.3 15.0 90.6 14.9 94.5 14.5 C98.4 14.1 106.5 12.8 110.3 12.3 C114.1 11.9 116.2 11.9 117.4 11.8 L119 13.500 L118 16 L120.500 17 L120.500 20 L118 21.500 L119 23.500 L117.400 24.400 L117.4 24.4 C116.2 24.5 114.1 24.7 110.3 25.2 C106.5 25.7 98.4 27.1 94.5 27.6 C90.6 28.1 89.3 28.3 86.7 28.4 C84.1 28.5 82.8 28.5 78.8 28.0 C74.8 27.5 68.2 26.3 63.0 25.2 C57.8 24.1 51.2 22.1 47.3 21.3 C43.4 20.5 42.0 20.5 39.4 20.5 C36.8 20.5 35.4 20.8 31.5 21.3 C27.6 21.8 19.7 22.9 15.8 23.3 C11.9 23.7 9.2 23.6 7.9 23.6 L6.500 22.500 L7.500 20 L5 19.500 L4.500 15.500 L7 14.500 L6.500 12.500 Z" fill="#000"/></svg>
<svg class="abs" style="left:118px;top:320px" width="32" height="26" viewBox="0 0 32 26" fill="#000"><ellipse cx="7.300" cy="11.500" rx="2.300" ry="3.300" transform="rotate(-28 7.300 11.500)"/><ellipse cx="12.100" cy="5.500" rx="2.500" ry="3.900" transform="rotate(-8 12.100 5.500)"/><ellipse cx="19.400" cy="5.500" rx="2.500" ry="3.900" transform="rotate(10 19.400 5.500)"/><ellipse cx="23.700" cy="12.300" rx="2.300" ry="3.400" transform="rotate(28 23.700 12.300)"/><path d="M15.200 12.600 C17.500 12.600 19.500 15 21.200 17.500 C22.800 19.800 22.300 22.300 20 22.500 C18 22.700 17 21.800 15.200 21.800 C13.400 21.800 12.400 22.700 10.400 22.500 C8.100 22.300 7.600 19.800 9.200 17.500 C10.900 15 12.900 12.600 15.200 12.600 Z"/></svg>
<span class="t" style="left:126px;top:346px;font-size:8.500px;color:#333">384</span>
<svg class="abs" style="left:150px;top:320px" width="130" height="36" viewBox="0 0 130 36"><path d="M7.9 11.8 C9.2 11.5 11.9 10.8 15.8 10.2 C19.7 9.6 27.6 8.6 31.5 8.2 C35.4 7.8 36.8 7.8 39.4 7.9 C42.0 8.0 43.4 8.1 47.3 8.7 C51.2 9.3 57.8 10.3 63.0 11.3 C68.2 12.3 74.8 13.9 78.8 14.5 C82.8 15.1 84.1 15.0 86.7 15.0 C89.3 15.0 90.6 14.9 94.5 14.5 C98.4 14.1 106.5 12.8 110.3 12.3 C114.1 11.9 116.2 11.9 117.4 11.8 L119 13.500 L118 16 L120.500 17 L120.500 20 L118 21.500 L119 23.500 L117.400 24.400 L117.4 24.4 C116.2 24.5 114.1 24.7 110.3 25.2 C106.5 25.7 98.4 27.1 94.5 27.6 C90.6 28.1 89.3 28.3 86.7 28.4 C84.1 28.5 82.8 28.5 78.8 28.0 C74.8 27.5 68.2 26.3 63.0 25.2 C57.8 24.1 51.2 22.1 47.3 21.3 C43.4 20.5 42.0 20.5 39.4 20.5 C36.8 20.5 35.4 20.8 31.5 21.3 C27.6 21.8 19.7 22.9 15.8 23.3 C11.9 23.7 9.2 23.6 7.9 23.6 L6.500 22.500 L7.500 20 L5 19.500 L4.500 15.500 L7 14.500 L6.500 12.500 Z" fill="#000"/></svg>
<div class="abs" style="left:122px;top:355.5px;width:160px;height:36px;border:1px solid #a9c0cc"></div>
<svg class="abs" style="left:118px;top:356px" width="32" height="26" viewBox="0 0 32 26" fill="#000"><ellipse cx="7.300" cy="11.500" rx="2.300" ry="3.300" transform="rotate(-28 7.300 11.500)"/><ellipse cx="12.100" cy="5.500" rx="2.500" ry="3.900" transform="rotate(-8 12.100 5.500)"/><ellipse cx="19.400" cy="5.500" rx="2.500" ry="3.900" transform="rotate(10 19.400 5.500)"/><ellipse cx="23.700" cy="12.300" rx="2.300" ry="3.400" transform="rotate(28 23.700 12.300)"/><path d="M15.200 12.600 C17.500 12.600 19.500 15 21.200 17.500 C22.800 19.800 22.300 22.300 20 22.500 C18 22.700 17 21.800 15.200 21.800 C13.400 21.800 12.400 22.700 10.400 22.500 C8.100 22.300 7.600 19.800 9.200 17.500 C10.900 15 12.900 12.600 15.200 12.600 Z"/></svg>
<span class="t" style="left:126px;top:382px;font-size:8.500px;color:#333">384</span>
<svg class="abs" style="left:150px;top:356px" width="130" height="36" viewBox="0 0 130 36"><path d="M7.9 11.8 C9.2 11.5 11.9 10.8 15.8 10.2 C19.7 9.6 27.6 8.6 31.5 8.2 C35.4 7.8 36.8 7.8 39.4 7.9 C42.0 8.0 43.4 8.1 47.3 8.7 C51.2 9.3 57.8 10.3 63.0 11.3 C68.2 12.3 74.8 13.9 78.8 14.5 C82.8 15.1 84.1 15.0 86.7 15.0 C89.3 15.0 90.6 14.9 94.5 14.5 C98.4 14.1 106.5 12.8 110.3 12.3 C114.1 11.9 116.2 11.9 117.4 11.8 L119 13.500 L118 16 L120.500 17 L120.500 20 L118 21.500 L119 23.500 L117.400 24.400 L117.4 24.4 C116.2 24.5 114.1 24.7 110.3 25.2 C106.5 25.7 98.4 27.1 94.5 27.6 C90.6 28.1 89.3 28.3 86.7 28.4 C84.1 28.5 82.8 28.5 78.8 28.0 C74.8 27.5 68.2 26.3 63.0 25.2 C57.8 24.1 51.2 22.1 47.3 21.3 C43.4 20.5 42.0 20.5 39.4 20.5 C36.8 20.5 35.4 20.8 31.5 21.3 C27.6 21.8 19.7 22.9 15.8 23.3 C11.9 23.7 9.2 23.6 7.9 23.6 L6.500 22.500 L7.500 20 L5 19.500 L4.500 15.500 L7 14.500 L6.500 12.500 Z" fill="#000"/></svg>
<!-- context menu -->
<div class="abs" style="left:284px;top:277px;width:114px;height:216px;background:#f2f2f2;border:1px solid #a0a0a0;box-shadow:2px 2px 3px rgba(0,0,0,.45)"></div>
<span class="t lib" style="left:298px;top:282.5px;font-size:9px;color:#1a1a1a">Save Brush<span style="letter-spacing:-0.8px">...</span></span>
<span class="t lib" style="left:298px;top:303.4px;font-size:9px;color:#1a1a1a">Rename Brush<span style="letter-spacing:-0.8px">...</span></span>
<span class="t lib" style="left:298px;top:317.6px;font-size:9px;color:#1a1a1a">Delete Brush</span>
<span class="t lib" style="left:298px;top:338.4px;font-size:9px;color:#1a1a1a">Text Only</span>
<span class="t lib" style="left:298px;top:352.6px;font-size:9px;color:#1a1a1a">Small Thumbnail</span>
<span class="t lib" style="left:298px;top:366.8px;font-size:9px;color:#1a1a1a">Large Thumbnail</span>
<span class="t lib" style="left:298px;top:381.1px;font-size:9px;color:#1a1a1a">Small List</span>
<span class="t lib" style="left:298px;top:395.2px;font-size:9px;color:#1a1a1a">Large List</span>
<span class="t lib" style="left:298px;top:409.3px;font-size:9px;color:#1a1a1a">Stroke Thumbnail</span>
<span class="t lib" style="left:298px;top:430.6px;font-size:9px;color:#1a1a1a">Preset Manager<span style="letter-spacing:-0.8px">...</span></span>
<span class="t lib" style="left:298px;top:451.4px;font-size:9px;color:#1a1a1a">Reset Brushes<span style="letter-spacing:-0.8px">...</span></span>
<span class="t lib" style="left:298px;top:465.5px;font-size:9px;color:#1a1a1a">Load Brushes<span style="letter-spacing:-0.8px">...</span></span>
<div class="abs" style="left:286px;top:296.0px;width:109px;height:1px;background:#c4c4c4"></div>
<div class="abs" style="left:286px;top:330.9px;width:109px;height:1px;background:#c4c4c4"></div>
<div class="abs" style="left:286px;top:423.1px;width:109px;height:1px;background:#c4c4c4"></div>
<div class="abs" style="left:286px;top:444.0px;width:109px;height:1px;background:#c4c4c4"></div>
<div class="abs" style="left:286px;top:477px;width:110px;height:14px;background:#5b96d8"></div><span class="t lib" style="left:298px;top:479.8px;font-size:9px;color:#c0daf6">Save Brushes<span style="letter-spacing:-0.8px">...</span></span>
<svg class="abs" style="left:288.500px;top:410.500px" width="7" height="7" viewBox="0 0 8 8"><path d="M1 4 L3 6.300 L7 1" fill="none" stroke="#111" stroke-width="1.800"/></svg>

<!-- PSE taskbar -->
<div id="tb" class="abs" style="left:0;top:504px;width:825px;height:42px;font-size:9px;color:#1a1a1a">
 <div class="abs" style="left:12px;top:5px;width:0;height:34px;border-left:1px dotted #444"></div>
 <span class="t" style="left:-1px;top:31.800px">ns</span>
 <span class="t" style="left:25.500px;top:31.800px">Undo</span>
 <span class="t" style="left:74.500px;top:31.800px">Redo</span>
 <span class="t" style="left:116.500px;top:31.800px">Rotate</span>
 <span class="t" style="left:162px;top:31.800px">Layout</span>
 <span class="t" style="left:202px;top:31.800px">Organizer</span>
 <span class="t" style="left:246px;top:31.800px;word-spacing:1px">Home Screen</span>
 <span class="t" style="left:656px;top:31.800px">Layers</span>
 <span class="t" style="left:701px;top:31.800px">Effects</span>
 <span class="t" style="left:747px;top:31.800px">Filters</span>
 <span class="t" style="left:792.500px;top:31.800px">Styles</span>
 <!-- undo -->
 <svg class="abs" style="left:25px;top:5px" width="22" height="22" viewBox="0 0 22 22"><path d="M6 7 H12 A5.500 5.500 0 0 1 12 18.500 H9" fill="none" stroke="#9ab4d6" stroke-width="3"/><path d="M1 7 L8 2 L8 12 Z" fill="#9ab4d6"/></svg>
 <!-- redo -->
 <svg class="abs" style="left:72px;top:5px" width="22" height="22" viewBox="0 0 22 22"><path d="M16 7 H10 A5.500 5.500 0 0 0 10 18.500 H13" fill="none" stroke="#4a7ab8" stroke-width="3"/><path d="M21 7 L14 1.500 L14 12.500 Z" fill="#4a7ab8"/></svg>
 <!-- rotate -->
 <svg class="abs" style="left:116px;top:4px" width="34" height="26" viewBox="0 0 34 26"><path d="M5.500 8.500 A9.300 9.300 0 1 1 18 21.800" fill="none" stroke="#4a7ab8" stroke-width="3.600"/><path d="M0.500 5 L9.500 2.500 L7.500 11.500 Z" fill="#4a7ab8"/><circle cx="3.500" cy="14.500" r="1.600" fill="#4a7ab8"/><circle cx="5" cy="19" r="1.600" fill="#4a7ab8"/><circle cx="8.500" cy="22.500" r="1.600" fill="#4a7ab8"/><circle cx="13" cy="23.800" r="1.600" fill="#4a7ab8"/><path d="M28 9.500 H33 L30.500 12.500 Z" fill="#333"/></svg>
 <!-- layout -->
 <svg class="abs" style="left:164px;top:6px" width="24" height="22" viewBox="0 0 24 22"><rect x="0.500" y="0.500" width="21" height="16" fill="#5f94cc" stroke="#2f5f98"/><rect x="2" y="2" width="8" height="13" fill="#8ab8e4"/><rect x="11" y="2" width="9" height="5" fill="#3a70b0"/><rect x="11" y="8.500" width="9" height="6.500" fill="#2c62a4"/><path d="M18 18 H23 L20.500 21 Z" fill="#333"/></svg>
 <!-- organizer -->
 <svg class="abs" style="left:210px;top:8px" width="22" height="17" viewBox="0 0 22 17"><rect x="0.500" y="0.500" width="20" height="15" fill="#dfeaf6" stroke="#2f5f98"/><rect x="1" y="1" width="19" height="3" fill="#3a70b0"/><g fill="#5f94cc"><rect x="2" y="5.500" width="5" height="4"/><rect x="8" y="5.500" width="5" height="4"/><rect x="14" y="5.500" width="5" height="4"/><rect x="2" y="10.500" width="5" height="4"/><rect x="8" y="10.500" width="5" height="4"/><rect x="14" y="10.500" width="5" height="4"/></g></svg>
 <!-- home -->
 <svg class="abs" style="left:261px;top:3px" width="24" height="25" viewBox="0 0 24 25"><path d="M12 0.500 L23.500 11 H0.500 Z" fill="#4a86c8"/><rect x="4" y="11" width="16" height="13" fill="#a9cdf0"/><rect x="9.500" y="15" width="5" height="9" fill="#3a70b0"/><rect x="11" y="16.500" width="2" height="7.500" fill="#d8e8f8"/></svg>
 <!-- layers -->
 <svg class="abs" style="left:657.500px;top:5.500px" width="20" height="19.500" viewBox="0 0 24 23" preserveAspectRatio="none"><path d="M12 10 L23 16 L12 22 L1 16 Z" fill="#2f62a4"/><path d="M12 2 L23 8.500 L12 15 L1 8.500 Z" fill="#6aa4e0" stroke="#dedede" stroke-width="1"/></svg>
 <!-- fx -->
 <span class="t" style="left:704px;top:3px;font-family:'Liberation Sans',sans-serif;font-style:italic;font-size:26px;color:#3a74b8;letter-spacing:-2px;-webkit-text-stroke:0.300px #3a74b8">fx</span>
 <!-- filters -->
 <svg class="abs" style="left:748px;top:6px" width="22" height="19.500" viewBox="0 0 24 22.500" preserveAspectRatio="none"><circle cx="12" cy="8" r="7" fill="#8cbcec"/><circle cx="7.500" cy="15" r="7" fill="#4a86c8" fill-opacity="0.900"/><circle cx="16.500" cy="15" r="7" fill="#2a5c9c" fill-opacity="0.900"/><circle cx="12" cy="8" r="7" fill="#a8d0f4" fill-opacity="0.550"/></svg>
 <!-- styles -->
 <svg class="abs" style="left:794px;top:6.500px" width="21" height="19" viewBox="0 0 25 25" preserveAspectRatio="none"><rect x="8" y="7" width="13" height="15" fill="#e8f0f8" stroke="#2f5f98" transform="rotate(18 14 14)"/><rect x="5" y="4" width="13" height="15" fill="#cfe0f4" stroke="#2f5f98" transform="rotate(9 11 11)"/><rect x="1.500" y="1.500" width="13" height="15" fill="#fff" stroke="#2f5f98" stroke-width="1.500"/><rect x="3.500" y="3.500" width="9" height="11" fill="#4a86c8"/></svg>
</div>
<!-- windows taskbar -->
<div id="wt" class="abs lib" style="left:0;top:545px;width:825px;height:30px">
 <div class="abs" style="left:0;top:0;width:195px;height:30px;background:#f2f2f2"></div>
 <span class="t" style="left:-2px;top:9px;font-size:11px;color:#444">ere to search</span>
 <svg class="abs" style="left:175px;top:7px" width="10" height="15" viewBox="0 0 10 15"><rect x="3" y="0.500" width="4" height="8" rx="2" fill="none" stroke="#333" stroke-width="1"/><path d="M1 7 A4 4 0 0 0 9 7 M5 11 V13.500 M2.500 13.500 H7.500" fill="none" stroke="#333" stroke-width="1"/></svg>
 <!-- task view -->
 <svg class="abs" style="left:206px;top:8px" width="14" height="13" viewBox="0 0 14 13"><rect x="1" y="3" width="8" height="7" fill="none" stroke="#eee" stroke-width="1.200"/><path d="M1 0.500 H9 M1 12.500 H9 M12 2 V11" stroke="#eee" stroke-width="1.200"/><circle cx="12" cy="3" r="1" fill="#eee"/></svg>
 <!-- folder -->
 <svg class="abs" style="left:243px;top:6px" width="17" height="15" viewBox="0 0 17 15"><path d="M0 1 H6 L7.500 3 H16 V14 H0 Z" fill="#e8b838"/><rect x="0" y="4.500" width="16.500" height="9.500" fill="#f8d868"/><rect x="4" y="9" width="8.500" height="5" fill="#58a8e8"/><rect x="6" y="11" width="4.500" height="3" fill="#f8e8a8"/></svg>
 <div class="abs" style="left:236px;top:29px;width:30px;height:1px;background:#8cb8e8"></div>
 <!-- chrome -->
 <svg class="abs" style="left:278px;top:5px" width="18" height="18" viewBox="0 0 18 18"><circle cx="9" cy="9" r="8.500" fill="#e04a3a"/><path d="M9 9 L1.700 4.700 A8.500 8.500 0 0 0 8 17.450 Z" fill="#3aa858"/><path d="M9 9 L8 17.450 A8.500 8.500 0 0 0 16.400 4.800 Z" fill="#f8cc3a"/><path d="M9 9 L16.400 4.800 A8.500 8.500 0 0 0 1.700 4.700 Z" fill="#e04a3a"/><circle cx="9" cy="9" r="4" fill="#f4f4f4"/><circle cx="9" cy="9" r="3.100" fill="#4a88e8"/></svg>
 <div class="abs" style="left:272px;top:29px;width:30px;height:1px;background:#8cb8e8"></div>
 <!-- PSE -->
 <div class="abs" style="left:306px;top:0;width:36px;height:30px;background:#3c3c40"></div>
 <svg class="abs" style="left:315px;top:5px" width="18" height="18" viewBox="0 0 18 18"><rect x="2" y="2" width="14" height="14" fill="#1c2a5c" transform="rotate(12 9 9)"/><circle cx="9" cy="9" r="4" fill="none" stroke="#6a86d8" stroke-width="1.300"/><circle cx="9" cy="9" r="1.300" fill="#6a86d8"/></svg>
 <div class="abs" style="left:306px;top:29px;width:36px;height:1px;background:#8cb8e8"></div>
 <!-- tray -->
 <svg class="abs" style="left:696px;top:9px" width="11.500" height="11" viewBox="0 0 14 13"><circle cx="9.500" cy="3.200" r="2.200" fill="none" stroke="#eee" stroke-width="1.100"/><path d="M5.500 11 C5.500 7 13.500 7 13.500 11" fill="none" stroke="#eee" stroke-width="1.100"/><circle cx="3.500" cy="6.500" r="1.800" fill="none" stroke="#eee" stroke-width="1.100"/><path d="M0.500 12.500 C0.500 9 6 9 6.500 12" fill="none" stroke="#eee" stroke-width="1.100"/></svg>
 <svg class="abs" style="left:723.500px;top:12.500px" width="9.500" height="6.500" viewBox="0 0 10 7"><path d="M1 6 L5 1.500 L9 6" fill="none" stroke="#eee" stroke-width="1.200"/></svg>
 <svg class="abs" style="left:740px;top:10.500px" width="12.500" height="8" viewBox="0 0 15 9"><path d="M3.500 9 A3 3 0 0 1 3.500 3.500 A4 4 0 0 1 10.500 2.500 A3.300 3.300 0 0 1 12 9 Z" fill="#eee"/></svg>
 <svg class="abs" style="left:758.500px;top:11.500px" width="12.500" height="7" viewBox="0 0 14 8"><rect x="0.600" y="0.600" width="11" height="6.800" fill="none" stroke="#eee" stroke-width="1.200"/><rect x="2" y="2" width="6" height="4" fill="#eee"/><rect x="12" y="2.500" width="1.500" height="3" fill="#eee"/></svg>
 <svg class="abs" style="left:778px;top:10px" width="11" height="11" viewBox="0 0 13 13"><path d="M1 12 A11 11 0 0 1 12 1" fill="none" stroke="#ccc" stroke-width="1.100"/><path d="M4 12 A8 8 0 0 1 12 4" fill="none" stroke="#ccc" stroke-width="1.100"/><path d="M7 12 A5 5 0 0 1 12 7" fill="none" stroke="#ccc" stroke-width="1.100"/><circle cx="11" cy="11" r="1.300" fill="#ccc"/></svg>
 <svg class="abs" style="left:794px;top:9.500px" width="12.500" height="11.500" viewBox="0 0 14 13"><path d="M0.600 4.500 H3 L6 1.500 V11.500 L3 8.500 H0.600 Z" fill="none" stroke="#eee" stroke-width="1.100"/><path d="M8 4.500 A3 3 0 0 1 8 8.500 M9.800 2.800 A5.500 5.500 0 0 1 9.800 10.200 M11.600 1.200 A8 8 0 0 1 11.600 11.800" fill="none" stroke="#eee" stroke-width="1"/></svg>
 <span class="t" style="left:813.500px;top:4.500px;font-size:9.500px;color:#f0f0f0">ENG</span>
 <span class="t" style="left:813.500px;top:17.500px;font-size:9.500px;color:#f0f0f0">INTL</span>
</div>
<!--MORE-->
</body></html>
